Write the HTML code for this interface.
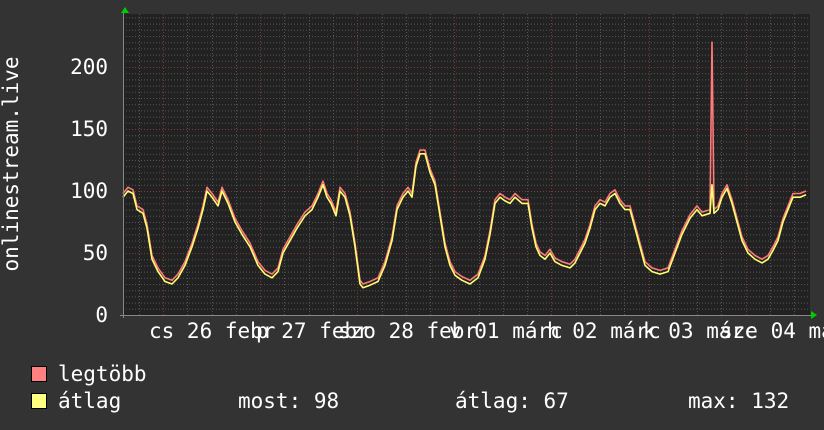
<!DOCTYPE html>
<html><head><meta charset="utf-8"><style>
html,body{margin:0;padding:0;background:#333;}
svg{display:block}
text{font-family:"DejaVu Sans Mono","Liberation Mono",monospace;font-size:21px;fill:#fff;}
</style></head><body>
<svg id="g" width="824" height="430" viewBox="0 0 824 430" xmlns="http://www.w3.org/2000/svg">
<rect width="824" height="430" fill="#333"/>
<rect x="123" y="14" width="687" height="301" fill="#222"/>
<g id="grid"></g>
<path id="red" fill="none" stroke="#ff7a7a" stroke-width="1.6" stroke-linejoin="round"/>
<path id="yel" fill="none" stroke="#ffff70" stroke-width="1.6" stroke-linejoin="round"/>
<line x1="120" y1="315.5" x2="812" y2="315.5" stroke="#888" stroke-width="1"/>
<line x1="123.5" y1="12" x2="123.5" y2="318" stroke="#888" stroke-width="1"/>
<polygon points="121,13 125,7 129,13" fill="#0c0"/>
<polygon points="811,311 817,315 811,319" fill="#0c0"/>
<text x="108" y="74" text-anchor="end">200</text>
<text x="108" y="136" text-anchor="end">150</text>
<text x="108" y="198" text-anchor="end">100</text>
<text x="108" y="260" text-anchor="end">50</text>
<text x="108" y="322" text-anchor="end">0</text>
<text transform="translate(18,164) rotate(-90)" text-anchor="middle">onlinestream.live</text>
<text x="149" y="338">cs 26 febr</text>
<text x="256" y="338">p 27 febr</text>
<text x="338" y="338">szo 28 febr</text>
<text x="449" y="338">v 01 márc</text>
<text x="547" y="338">h 02 márc</text>
<text x="643" y="338">k 03 márc</text>
<text x="720" y="338">sze 04 márc</text>
<rect x="31.5" y="366.5" width="15" height="15" fill="#ff8080" stroke="#000"/>
<rect x="31.5" y="393.5" width="15" height="15" fill="#ffff80" stroke="#000"/>
<text x="58" y="381">legtöbb</text>
<text x="58" y="408">átlag</text>
<text x="238" y="408">most: 98</text>
<text x="455" y="408">átlag: 67</text>
<text x="688" y="408">max: 132</text>
</svg>
<script>
var g=document.getElementById("grid"),s="";
for(var v=5;v<=240;v+=5){var y=315-v*1.24;if(y<14)break;var maj=(v%50==0);
s+='<line x1="123" x2="810" y1="'+(y+.5)+'" y2="'+(y+.5)+'" stroke="'+(maj?'#7a3a3a':'#555')+'" stroke-dasharray="1,2"/>';}
for(var i=-1;i<30;i++){var x=163+i*24.28;if(x<124||x>810)continue;var maj=(i%4==0);
s+='<line y1="14" y2="315" x1="'+(Math.round(x)+.5)+'" x2="'+(Math.round(x)+.5)+'" stroke="'+(maj?'#7a3a3a':'#555')+'" stroke-dasharray="1,2"/>';}
g.innerHTML=s;
var d=[123,95,128,100,133,98,137,85,143,82,147,70,152,45,158,35,165,27,172,25,178,30,185,40,192,55,198,70,203,85,207,100,212,95,218,88,222,100,228,90,235,75,242,65,250,55,258,40,265,33,272,30,278,35,283,50,290,60,297,70,305,80,312,85,318,95,323,105,327,95,331,90,336,80,340,100,345,95,350,80,355,55,360,25,363,22,370,24,378,27,385,40,392,60,397,85,403,95,408,100,412,95,416,120,420,130,425,130,430,115,435,105,440,80,445,55,450,40,455,32,462,28,470,25,478,30,485,45,490,65,495,90,500,95,505,92,510,90,515,95,522,90,528,90,532,70,536,55,540,48,545,45,550,50,555,43,562,40,570,38,575,42,580,50,585,58,590,70,595,85,600,90,605,88,610,95,615,98,620,90,625,85,630,85,635,70,640,55,645,40,652,35,660,33,668,35,675,50,682,65,690,78,697,85,702,80,710,82,712,105,714,82,718,85,722,95,727,102,732,90,737,75,742,60,748,50,755,45,762,42,768,45,773,52,778,60,783,75,788,85,793,95,800,95,806,97];
function path(off,spike){var p="";for(var i=0;i<d.length;i+=2){var x=d[i],v=d[i+1]+off;if(spike&&x==712)v=220;var y=315-v*1.24;p+=(i?"L":"M")+x+","+y.toFixed(1);}return p;}
document.getElementById("red").setAttribute("d",path(3,true));
document.getElementById("yel").setAttribute("d",path(0,false));
</script>
</body></html>
